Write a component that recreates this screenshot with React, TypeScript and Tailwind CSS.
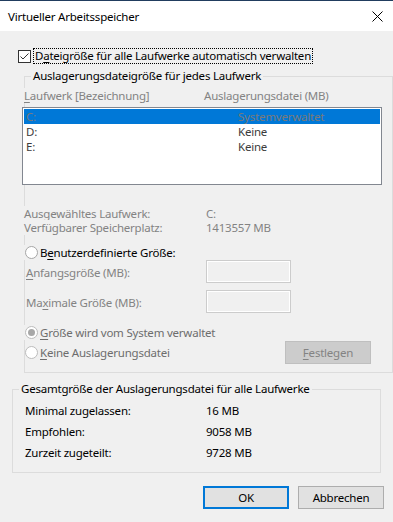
import React from 'react';

const disabled = 'text-[#838383]';

function Radio({ checked, dim }: { checked?: boolean; dim?: boolean }) {
  return (
    <span
      className={`flex h-[13px] w-[13px] shrink-0 items-center justify-center rounded-full border bg-white ${
        dim ? 'border-[#bcbcbc]' : 'border-[#a6a6a6]'
      }`}
    >
      {checked && <span className="h-[7px] w-[7px] rounded-full bg-[#a8a8a8]" />}
    </span>
  );
}

function Edit() {
  return <div className="h-[23px] w-[85px] border border-[#cccccc] bg-[#f0f0f0] shadow-[inset_0_0_0_1px_#ffffff]" />;
}

const drives = [
  { name: 'C:', size: 'Systemverwaltet', selected: true },
  { name: 'D:', size: 'Keine' },
  { name: 'E:', size: 'Keine' },
];

const totals = [
  ['Minimal zugelassen:', '16 MB'],
  ['Empfohlen:', '9058 MB'],
  ['Zurzeit zugeteilt:', '9728 MB'],
];

export default function App() {
  return (
    <div className="h-[522px] w-[393px] overflow-hidden bg-[#f0f0f0] font-['Segoe_UI','Noto_Sans',sans-serif] text-[11.5px] leading-[15px] tracking-[-0.22px] text-black">
      <div className="h-px bg-[#213d5e]" />

      {/* Title bar */}
      <div className="flex h-[30px] items-center justify-between bg-white pl-[8px] pr-[10px]">
        <span className="text-[11.5px]">Virtueller Arbeitsspeicher</span>
        <svg width="11" height="11" viewBox="0 0 11 11" className="mt-px">
          <path d="M0.5 0.5 L10.5 10.5 M10.5 0.5 L0.5 10.5" stroke="#000" strokeWidth="1" />
        </svg>
      </div>

      {/* Auto manage checkbox */}
      <div className="ml-[18px] mt-[17px] flex h-[16px] items-center gap-[2px]">
        <span className="flex h-[13px] w-[13px] items-center justify-center border border-[#333333] bg-white">
          <svg width="11" height="11" viewBox="0 0 11 11">
            <path d="M1.5 5.5 L4 8 L9.5 2.5" fill="none" stroke="#333" strokeWidth="1" />
          </svg>
        </span>
        <span className="border border-dotted border-black px-px leading-[14px]">
          D<span className="underline underline-offset-2">a</span>teigröße für alle Laufwerke automatisch verwalten
        </span>
      </div>

      {/* Per drive group */}
      <fieldset className="ml-[24px] mt-[4px] w-[369px] border border-[#dcdcdc] p-0 pb-[8px]">
        <legend className="ml-[6px] px-[2px] leading-[16px]">Auslagerungsdateigröße für jedes Laufwerk</legend>

        <div className={`mt-[4px] flex h-[15px] items-center ${disabled}`}>
          <span className="-ml-px w-[180px] bg-[#f0f0f0]">
            <span className="underline underline-offset-2">L</span>aufwerk [Bezeichnung]
          </span>
          <span>Auslagerungsdatei (MB)</span>
        </div>

        <div className="-ml-[3px] mt-[4px] h-[78px] w-[360px] border border-[#828790] bg-white p-px">
          {drives.map((d) => (
            <div
              key={d.name}
              className={`flex h-[15px] items-center pl-[2px] ${d.selected ? 'bg-[#0078d7] text-[#7a7a7a]' : 'text-[#3c3c3c]'}`}
            >
              <span className="w-[212px]">{d.name}</span>
              <span>{d.size}</span>
            </div>
          ))}
        </div>

        <div className={`mt-[21px] ${disabled}`}>
          <div className="flex h-[14px] items-center">
            <span className="-ml-px w-[182px] bg-[#f0f0f0]">Ausgewähltes Laufwerk:</span>
            <span>C:</span>
          </div>
          <div className="flex h-[14px] items-center">
            <span className="-ml-px w-[182px] bg-[#f0f0f0]">Verfügbarer Speicherplatz:</span>
            <span>1413557 MB</span>
          </div>
        </div>

        <div className="-ml-px mt-[11px] flex h-[15px] w-fit items-center gap-[2px] bg-[#f0f0f0] pl-px pr-[2px]">
          <Radio />
          <span>
            B<span className="underline underline-offset-2">e</span>nutzerdefinierte Größe:
          </span>
        </div>

        <div className={`flex h-[23px] items-center ${disabled}`}>
          <span className="ml-px w-[180px] pt-[2px]">
            <span className="underline underline-offset-2">A</span>nfangsgröße (MB):
          </span>
          <Edit />
        </div>
        <div className={`mt-[7px] flex h-[23px] items-center ${disabled}`}>
          <span className="ml-px w-[180px] pt-[2px]">
            Ma<span className="underline underline-offset-2">x</span>imale Größe (MB):
          </span>
          <Edit />
        </div>

        <div className={`-ml-px mt-[12px] flex h-[15px] w-fit items-center gap-[2px] bg-[#f0f0f0] pl-px pr-[2px] text-[#6d6d6d]`}>
          <Radio checked dim />
          <span>
            <span className="underline underline-offset-2">G</span>röße wird vom System verwaltet
          </span>
        </div>
        <div className="mt-px flex h-[23px] items-center">
          <div className="-ml-px flex w-[261px] items-center gap-[2px] pl-px text-[#6d6d6d]">
            <span className="flex items-center gap-[2px] bg-[#f0f0f0] pr-[2px]">
              <Radio dim />
              <span>
                <span className="underline underline-offset-2">K</span>eine Auslagerungsdatei
              </span>
            </span>
          </div>
          <div className="flex h-[23px] w-[86px] items-center justify-center border border-[#bfbfbf] bg-[#cccccc] text-[#838383]">
            <span>
              <span className="underline underline-offset-2">F</span>estlegen
            </span>
          </div>
        </div>
      </fieldset>

      {/* Totals group */}
      <fieldset className="ml-[12px] mt-[8px] w-[369px] border border-[#dcdcdc] p-0 pb-[9px]">
        <legend className="ml-[6px] px-[2px] leading-[16px]">Gesamtgröße der Auslagerungsdatei für alle Laufwerke</legend>
        <div className="mt-[3px] pl-[12px]">
          {totals.map(([label, value]) => (
            <div key={label} className="flex h-[21px] items-center">
              <span className="w-[181px]">{label}</span>
              <span>{value}</span>
            </div>
          ))}
        </div>
      </fieldset>

      {/* Buttons */}
      <div className="mt-[13px] flex justify-end gap-[9px] pr-[9px]">
        <button className="flex h-[23px] w-[86px] items-center justify-center border-2 border-[#0078d7] bg-[#e1e1e1]">
          OK
        </button>
        <button className="flex h-[23px] w-[86px] items-center justify-center border border-[#adadad] bg-[#e1e1e1]">
          Abbrechen
        </button>
      </div>
    </div>
  );
}
